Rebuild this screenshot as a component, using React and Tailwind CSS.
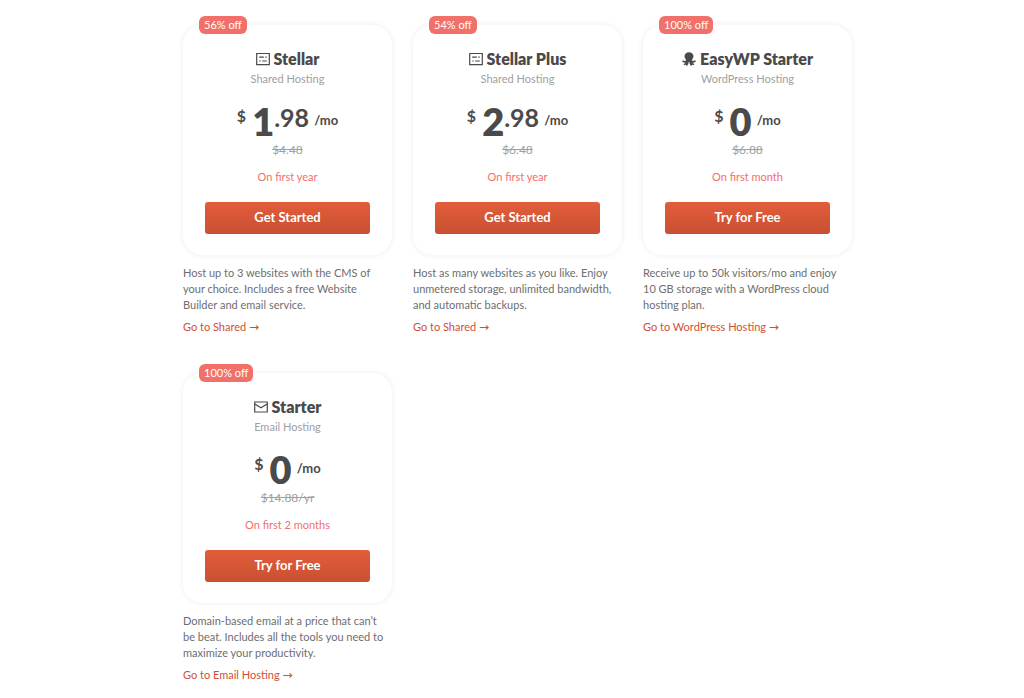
const plans = [
  {
    id: "stellar",
    discount: "56% off",
    icon: "server",
    name: "Stellar",
    type: "Shared Hosting",
    whole: "1",
    cents: ".98",
    oldPrice: "$4.48",
    term: "On first year",
    cta: "Get Started",
    description: "Host up to 3 websites with the CMS of your choice. Includes a free Website Builder and email service.",
    link: "Go to Shared",
  },
  {
    id: "stellar-plus",
    discount: "54% off",
    icon: "server",
    name: "Stellar Plus",
    type: "Shared Hosting",
    whole: "2",
    cents: ".98",
    oldPrice: "$6.48",
    term: "On first year",
    cta: "Get Started",
    description: "Host as many websites as you like. Enjoy unmetered storage, unlimited bandwidth, and automatic backups.",
    link: "Go to Shared",
  },
  {
    id: "easywp",
    discount: "100% off",
    icon: "octopus",
    name: "EasyWP Starter",
    type: "WordPress Hosting",
    whole: "0",
    oldPrice: "$6.88",
    term: "On first month",
    cta: "Try for Free",
    description: "Receive up to 50k visitors/mo and enjoy 10 GB storage with a WordPress cloud hosting plan.",
    link: "Go to WordPress Hosting",
  },
  {
    id: "email",
    discount: "100% off",
    icon: "mail",
    name: "Starter",
    type: "Email Hosting",
    whole: "0",
    oldPrice: "$14.88/yr",
    term: "On first 2 months",
    cta: "Try for Free",
    description: "Domain-based email at a price that can’t be beat. Includes all the tools you need to maximize your productivity.",
    link: "Go to Email Hosting",
  },
];

function PlanIcon({ name }) {
  if (name === "octopus") {
    return (
      <svg viewBox="0 0 14 14" className="h-[14px] w-[14px]" fill="none" stroke="currentColor" strokeLinecap="round" aria-hidden="true">
        <path
          d="M7 .3C4.300.3 2.500 2 2.500 4.300c0 1.500.9 2.300 1.300 3.200.2.900.1 2.500.1 2.500h6.200s-.1-1.600.1-2.500c.4-.9 1.300-1.700 1.300-3.200C11.500 2 9.700.3 7 .3Z"
          fill="currentColor"
          stroke="none"
        />
        <path d="M4.600 9.200C3.600 10 2 9.900 1 9.200M5 9.900c-.4 1.600-1.300 2.300-2.500 2.300M5.900 9.800c0 1.500-.4 2.400-1.200 3.200M9.400 9.200c1 .8 2.600.7 3.600 0M9 9.900c.4 1.600 1.300 2.300 2.500 2.300M8.100 9.800c0 1.500.4 2.400 1.200 3.200" strokeWidth="1.600" />
      </svg>
    );
  }
  if (name === "mail") {
    return (
      <svg viewBox="0 0 14 14" className="h-[14px] w-[14px]" fill="none" stroke="currentColor" strokeWidth="1.200" aria-hidden="true">
        <path d="M.7 2h12.600v10H.7ZM.9 3.900 7 7.700l6.100-3.800" />
      </svg>
    );
  }
  return (
    <svg viewBox="0 0 14 14" className="h-[14px] w-[14px]" fill="none" stroke="currentColor" strokeWidth="1.200" aria-hidden="true">
      <path d="M.7 1.500h12.600v11.200H.7Z" />
      <path d="M3.200 5.200h4.600M9.300 5.200h1.400M3.200 9h1.400M6.200 9h4.600" />
    </svg>
  );
}

function PlanCard({ plan }) {
  return (
    <article>
      <div className="relative rounded-[20px] bg-white px-[22px] pt-[21px] pb-[21px] text-center shadow-[0_0_6px_rgba(0,0,0,0.08)]">
        <span className="absolute -top-[9px] left-4 rounded-[6px] bg-[#f2706a] px-[5px] text-[11px] leading-[18px] text-white">{plan.discount}</span>
        <h3 className="flex items-center justify-center gap-1 text-[16px] leading-[25px] font-extrabold whitespace-nowrap">
          <PlanIcon name={plan.icon} />
          {plan.name}
        </h3>
        <p className="text-[11px] leading-4 text-[#a0a0a0]">{plan.type}</p>
        <div className="mt-[14px] flex h-10 items-start justify-center font-bold">
          <span className="mr-[6px] text-[16px] leading-[30px]">$</span>
          <span className="text-[38px] leading-[40px] font-extrabold">{plan.whole}</span>
          {plan.cents && <span className="text-[25px] leading-8">{plan.cents}</span>}
          <span className="ml-[5px] text-[13px] leading-[38px]">/mo</span>
        </div>
        <p className="text-[12px] leading-[18px] text-[#a0a0a0] line-through">{plan.oldPrice}</p>
        <p className="mt-[10px] text-[11px] leading-4 text-[#f2706a]">{plan.term}</p>
        <button
          type="button"
          className="mt-[17px] h-8 w-full rounded-[3px] bg-linear-to-b from-[#e35d3a] to-[#c85032] text-[13px] font-bold text-white"
        >
          {plan.cta}
        </button>
      </div>
      <p className="mt-[10px] pr-1 text-[11px] leading-4 text-[#6d6e70]">{plan.description}</p>
      <a href={`#${plan.id}`} className="mt-[6px] block text-[11px] leading-4 text-[#d14f34]">
        {plan.link} <span className="font-['DejaVu_Sans',sans-serif] text-[12px]">→</span>
      </a>
    </article>
  );
}

export default function App() {
  return (
    <main className="min-h-screen bg-white pt-[25px] pb-4 pl-[11px] font-['Lato','Open_Sans',sans-serif] text-[#4a4a4a]">
      <div className="mx-auto grid max-w-[669px] grid-cols-1 gap-x-[21px] gap-y-[38px] sm:grid-cols-3">
        {plans.map((plan) => (
          <PlanCard key={plan.id} plan={plan} />
        ))}
      </div>
    </main>
  );
}
